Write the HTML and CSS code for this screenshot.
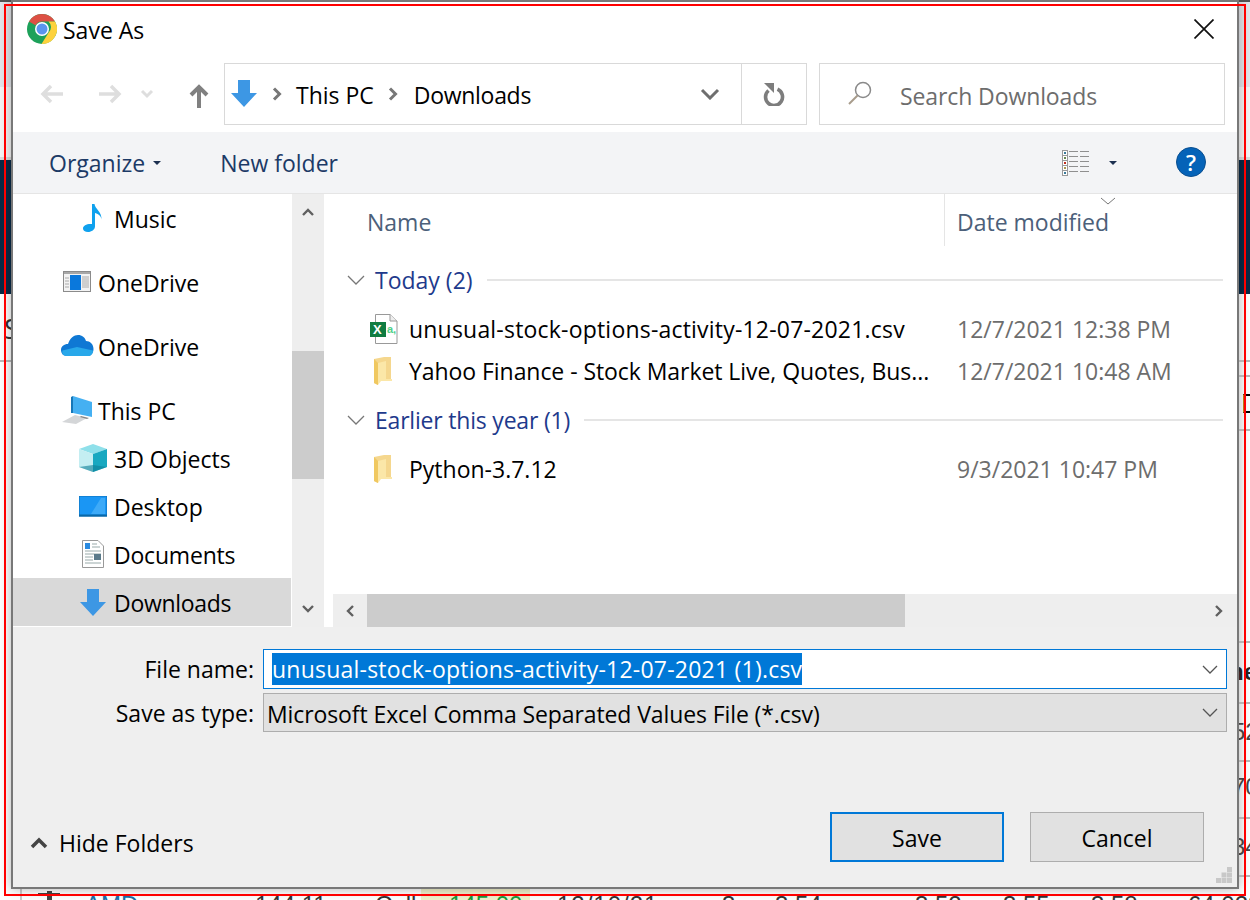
FILE: index.html
```html
<!DOCTYPE html>
<html lang="en">
<head>
<meta charset="utf-8">
<title>Save As</title>
<link rel="stylesheet" href="styles.css">
</head>
<body>
<div class="backdrop">
  <div class="bg-top"></div>
  <div class="bg-band"></div>
  <div class="bg-row bg-row-s"><span>S</span></div>
  <div class="bg-amd">
    <svg class="bg-plus" width="22" height="12" viewBox="0 0 22 12"><path d="M9 0H14V2H22V5H14V12H9V5H0V2H9Z" fill="#444"/></svg><span class="bg-link">AMD</span><span>144.11</span><span>Call</span><span class="bg-green">145.00</span><span class="bg-date">12/10/21</span><span>3</span><span>3.54</span><span>3.52</span><span>3.55</span><span>3.58</span><span>64,028</span>
  </div>
</div>
<div class="right-bits">
  <i class="rl rl1"></i><i class="rl rl2"></i><i class="rl rl3"></i><i class="rl rl4"></i><i class="rl rl5"></i><i class="rl rl6"></i><i class="rl rl7"></i><i class="rl rl8"></i>
  <i class="rb-box"></i>
  <span class="rb rb1">ne</span><span class="rb rb2">52</span><span class="rb rb3">70</span><span class="rb rb4">34</span>
</div>
<div class="red-frame"></div>

<main class="dialog">
  <header class="titlebar">
    <svg class="chrome" width="30" height="30" viewBox="0 0 30 30">
      <circle cx="15" cy="15" r="15" fill="#1da15a"/>
      <path d="M15 0A15 15 0 0 1 28 7.500H15A7.500 7.500 0 0 0 8.500 11.300L2 7.500A15 15 0 0 1 15 0Z" fill="#dd5044"/>
      <path d="M28 7.500A15 15 0 0 1 14.500 30L21.500 18.700A7.500 7.500 0 0 0 21.500 7.500Z" fill="#fdd23d"/>
      <circle cx="15" cy="15" r="7" fill="#fff"/>
      <circle cx="15" cy="15" r="5.500" fill="#5a95ef"/>
    </svg>
    <span class="title">Save As</span>
    <svg class="close" width="20" height="20" viewBox="0 0 20 20"><path d="M0.500 0.500L19.500 19.500M19.500 0.500L0.500 19.500" stroke="#111" stroke-width="1.700" fill="none"/></svg>
  </header>

  <nav class="navbar">
    <div class="nav-buttons">
      <svg class="nav-back" width="24" height="20" viewBox="0 0 24 20"><path d="M11 2L3 10L11 18M3 10H23" stroke="#dedede" stroke-width="3.500" fill="none"/></svg>
      <svg class="nav-fwd" width="24" height="20" viewBox="0 0 24 20"><path d="M13 2L21 10L13 18M1 10H21" stroke="#dedede" stroke-width="3.500" fill="none"/></svg>
      <svg class="nav-down" width="14" height="10" viewBox="0 0 14 10"><path d="M2 2L7 7L12 2" stroke="#dedede" stroke-width="3" fill="none"/></svg>
      <svg class="nav-up" width="20" height="24" viewBox="0 0 20 24"><path d="M2 11L10 3L18 11M10 3V24" stroke="#808080" stroke-width="4" fill="none"/></svg>
    </div>
    <div class="address">
      <svg class="addr-icon" width="26" height="27" viewBox="0 0 26 27"><path d="M7 0H19V13H26L13 27L0 13H7Z" fill="#3d97e4"/></svg>
      <svg class="crumb crumb-a" width="10" height="14" viewBox="0 0 10 14"><path d="M2 1.500L7.500 7L2 12.500" stroke="#777" stroke-width="3" fill="none"/></svg>
      <span class="crumb-text">This PC</span>
      <svg class="crumb crumb-b" width="10" height="14" viewBox="0 0 10 14"><path d="M2 1.500L7.500 7L2 12.500" stroke="#777" stroke-width="3" fill="none"/></svg>
      <span class="crumb-text tight">Downloads</span>
      <svg class="addr-chev" width="20" height="12" viewBox="0 0 20 12"><path d="M2 2L10 10L18 2" stroke="#6e6e6e" stroke-width="3" fill="none"/></svg>
      <div class="refresh">
        <svg width="22" height="24" viewBox="0 0 22 24"><path d="M14.500 7.200A8.500 8.500 0 1 1 5.500 8.500" stroke="#7d7d7d" stroke-width="3.600" fill="none"/><path d="M1 1H11V11Z" fill="#7d7d7d"/></svg>
      </div>
    </div>
    <div class="search">
      <svg width="28" height="28" viewBox="0 0 28 28"><circle cx="17" cy="10" r="7.500" stroke="#8a8a8a" stroke-width="1.500" fill="none"/><path d="M11.500 15.500L3 24" stroke="#a89c8c" stroke-width="2" fill="none"/></svg>
      <span class="search-text">Search Downloads</span>
    </div>
  </nav>

  <div class="toolbar">
    <span class="tool-btn">Organize</span>
    <span class="caret"></span>
    <span class="tool-btn tool-new">New folder</span>
    <svg class="view-icon" width="28" height="28" viewBox="0 0 28 28">
      <rect x="0.500" y="1.500" width="5" height="5" fill="#fff" stroke="#999"/><rect x="0.500" y="6.500" width="5" height="5" fill="#fff" stroke="#999"/><rect x="0.500" y="11.500" width="5" height="5" fill="#fff" stroke="#999"/><rect x="0.500" y="16.500" width="5" height="5" fill="#fff" stroke="#999"/><rect x="0.500" y="21.500" width="5" height="5" fill="#fff" stroke="#999"/>
      <rect x="2" y="3" width="2" height="2" fill="#3a7a9a"/><rect x="2" y="8" width="2" height="2" fill="#6a8a50"/><rect x="2" y="13" width="2" height="2" fill="#c03020"/><rect x="2" y="18" width="2" height="2" fill="#a89a50"/><rect x="2" y="23" width="2" height="2" fill="#3a7a9a"/>
      <path d="M7 2.500H16M18 2.500H27M7 7.500H16M18 7.500H27M7 12.500H16M18 12.500H27M7 17.500H16M18 17.500H27M7 22.500H16M18 22.500H27" stroke="#8f8f8f"/>
    </svg>
    <span class="caret caret-view"></span>
    <span class="help">?</span>
  </div>

  <div class="main">
    <aside class="sidebar">
      <ul class="tree">
        <li class="node sub">
          <svg width="20" height="28" viewBox="0 0 20 28"><path d="M9 0H11.500C12 5 19 8 18.500 15.500C18 11.500 14.500 9.500 12 9V22.500C12 25.500 8.500 28 5 28C2 28 0 26.500 0 24.500C0 21.500 4 19.500 9 20Z" fill="#0fa1ee"/></svg>
          <span>Music</span>
        </li>
        <li class="node gap">
          <svg width="28" height="22" viewBox="0 0 28 22"><rect x="0.500" y="0.500" width="27" height="20" fill="#f3f3f3" stroke="#8b8b8b"/><rect x="1" y="1" width="26" height="2" fill="#a8a8a8"/><rect x="7" y="4" width="11" height="15" fill="#0a78dc"/><path d="M19 6H26M19 8H26M19 10H26M19 12H26M19 14H26M19 16H26M2 7H6M2 10H6M2 13H6M2 16H6" stroke="#aaa"/></svg>
          <span>OneDrive</span>
        </li>
        <li class="node gap">
          <svg class="wide" width="33" height="22" viewBox="0 0 33 22"><path d="M6 21C2 21 0 18 0 15C0 11.500 3 9 7 9C9 3 13 0 17 0C21 0 24 2.500 25 6C29 6 32.500 9 32.500 14C32.500 18 30 21 27 21Z" fill="#0f78d4"/><path d="M6 21C2 21 0.500 18.500 1.500 15.500L16 12L32 15.500C32 19 30 21 27 21Z" fill="#28a8ea"/></svg>
          <span>OneDrive</span>
        </li>
        <li class="node gap">
          <svg class="wide" width="32" height="28" viewBox="0 0 32 28"><path d="M12 0L31 6V21L12 17Z" fill="#45b0f2"/><path d="M12 0L10 1V17L12 17Z" fill="#1677b8"/><path d="M1 26L14 19L26 22L15 28Z" fill="#d4d6d8"/><path d="M20 20L28 22L26 23L19 21Z" fill="#888"/></svg>
          <span>This PC</span>
        </li>
        <li class="node sub">
          <svg width="28" height="28" viewBox="0 0 28 28"><path d="M14 0L28 5L14 10L0 5Z" fill="#8fe0ea"/><path d="M0 5L14 10V28L0 23Z" fill="#c4eef2"/><path d="M14 10L28 5V23L14 28Z" fill="#18a8c0"/><path d="M14 21L28 23L14 28L0 23Z" fill="#0e7f96" opacity=".6"/></svg>
          <span>3D Objects</span>
        </li>
        <li class="node sub">
          <svg width="28" height="21" viewBox="0 0 28 21"><rect width="28" height="20" fill="#1a96f4" stroke="#0a6fb8"/><path d="M12 18L22 2H26V18Z" fill="#3daaf8"/><rect y="18.500" width="28" height="2" fill="#0a68a8"/></svg>
          <span>Desktop</span>
        </li>
        <li class="node sub">
          <svg width="22" height="28" viewBox="0 0 22 28"><path d="M0.500 0.500H16L21.500 6V27.500H0.500Z" fill="#fff" stroke="#999"/><path d="M3 4H7M10 4H15M10 7H18M3 11H19M3 14H19M3 17H11M3 20H11M3 23H19" stroke="#9aa"/><rect x="3" y="3" width="5" height="6" fill="#2a8ae0"/><rect x="12" y="14" width="7" height="6" fill="#5a7a8a"/></svg>
          <span class="tight-s">Documents</span>
        </li>
        <li class="node sub selected">
          <svg width="26" height="27" viewBox="0 0 26 27"><path d="M7 0H19V13H26L13 27L0 13H7Z" fill="#3d97e4"/></svg>
          <span class="tight">Downloads</span>
        </li>
      </ul>
    </aside>
    <div class="vscroll">
      <svg class="sb-up" width="12" height="8" viewBox="0 0 12 8"><path d="M1 7L6 2L11 7" stroke="#606060" stroke-width="2.400" fill="none"/></svg>
      <div class="vthumb"></div>
      <svg class="sb-down" width="12" height="8" viewBox="0 0 12 8"><path d="M1 1L6 6L11 1" stroke="#606060" stroke-width="2.400" fill="none"/></svg>
    </div>
    <section class="files">
      <div class="colhead">
        <span class="col-name">Name</span>
        <span class="col-date">Date modified
          <svg class="sort" width="16" height="8" viewBox="0 0 16 8"><path d="M1 1L8 7L15 1" stroke="#777" fill="none"/></svg>
        </span>
      </div>
      <div class="listing">
        <div class="group group-first">
          <svg width="18" height="10" viewBox="0 0 18 10"><path d="M1 1L9 9L17 1" stroke="#777" stroke-width="1.300" fill="none"/></svg>
          <span>Today (2)</span><i></i>
        </div>
        <div class="file file-csv">
          <svg width="28" height="30" viewBox="0 0 28 30"><path d="M5.500 0.500H20L27 7V29.500H5.500Z" fill="#fff" stroke="#999"/><path d="M20 .500V7H27" fill="#eee" stroke="#999"/><rect y="8" width="16" height="15" fill="#107c41"/><text x="3" y="20" class="xl">X</text><text x="17" y="19" class="xa">a,</text></svg>
          <span class="fname fname-csv">unusual-stock-options-activity-12-07-2021.csv</span>
          <span class="fdate">12/7/2021 12:38 PM</span>
        </div>
        <div class="file file-y">
          <svg class="folder" width="19" height="28" viewBox="0 0 19 28"><path d="M0 2L10 0H17V24H19L4 24V28L0 26Z" fill="#f5d78e"/><path d="M4 6L12 4V22H18V24H7L4 28Z" fill="#fbe7a8"/><path d="M0 2L4 6V28L0 26Z" fill="#f0c860"/></svg>
          <span class="fname fname-y">Yahoo Finance - Stock Market Live, Quotes, Bus...</span>
          <span class="fdate">12/7/2021 10:48 AM</span>
        </div>
        <div class="group group-second">
          <svg width="18" height="10" viewBox="0 0 18 10"><path d="M1 1L9 9L17 1" stroke="#777" stroke-width="1.300" fill="none"/></svg>
          <span class="tight-s">Earlier this year (1)</span><i></i>
        </div>
        <div class="file file-p">
          <svg class="folder" width="19" height="28" viewBox="0 0 19 28"><path d="M0 2L10 0H17V24H19L4 24V28L0 26Z" fill="#f5d78e"/><path d="M4 6L12 4V22H18V24H7L4 28Z" fill="#fbe7a8"/><path d="M0 2L4 6V28L0 26Z" fill="#f0c860"/></svg>
          <span class="fname">Python-3.7.12</span>
          <span class="fdate">9/3/2021 10:47 PM</span>
        </div>
      </div>
      <div class="hscroll">
        <svg class="sb-left" width="8" height="12" viewBox="0 0 8 12"><path d="M7 1L2 6L7 11" stroke="#606060" stroke-width="2.400" fill="none"/></svg>
        <div class="hthumb"></div>
        <svg class="sb-right" width="8" height="12" viewBox="0 0 8 12"><path d="M1 1L6 6L1 11" stroke="#606060" stroke-width="2.400" fill="none"/></svg>
      </div>
    </section>
  </div>

  <div class="form">
    <div class="form-row">
      <label class="form-label">File name:</label>
      <div class="combo combo-name">
        <span class="sel">unusual-stock-options-activity-12-07-2021 (1).csv</span>
        <svg width="16" height="9" viewBox="0 0 16 9"><path d="M1 1L8 8L15 1" stroke="#555" stroke-width="1.300" fill="none"/></svg>
      </div>
    </div>
    <div class="form-row form-row2">
      <label class="form-label">Save as type:</label>
      <div class="combo combo-type">
        <span class="type-text">Microsoft Excel Comma Separated Values File (*.csv)</span>
        <svg width="16" height="9" viewBox="0 0 16 9"><path d="M1 1L8 8L15 1" stroke="#555" stroke-width="1.300" fill="none"/></svg>
      </div>
    </div>
    <div class="actions">
      <svg width="18" height="12" viewBox="0 0 18 12"><path d="M2 10L9 3L16 10" stroke="#444" stroke-width="3.500" fill="none"/></svg>
      <span class="hide">Hide Folders</span>
      <button class="btn btn-save">Save</button>
      <button class="btn btn-cancel">Cancel</button>
    </div>
    <svg class="grip" width="16" height="16" viewBox="0 0 16 16"><path d="M11 0h5v5h-5zM5.500 5.500h5v5h-5zM11 5.500h5v5h-5zM0 11h5v5H0zM5.500 11h5v5h-5zM11 11h5v5h-5z" fill="#c8c8c8"/></svg>
  </div>
</main>
</body>
</html>
```
FILE: styles.css
```css
* { box-sizing: border-box; }
html, body { margin: 0; padding: 0; }
body {
  width: 1250px;
  height: 900px;
  overflow: hidden;
  position: relative;
  background: #fff;
  font-family: "Open Sans", "Noto Sans", sans-serif;
  font-size: 23px;
  color: #000;
}
ul { list-style: none; margin: 0; padding: 0; }
svg { display: block; flex: none; }
.tight { letter-spacing: -0.3px; }
.tight-s { letter-spacing: -0.2px; }

.backdrop { position: absolute; inset: 0; display: flex; flex-direction: column; }
.bg-top {
  height: 160px;
  border-top: 2px solid #555;
  background: linear-gradient(#e4e6eb 0 85px, #f6f6f6 85px 155px, #ddd 155px);
}
.bg-band { height: 134px; background: #0a2a47; }
.bg-row { height: 68px; border-bottom: 2px solid #bbb; padding: 16px 0 0 4px; font-size: 27px; color: #333; }
.bg-amd {
  position: absolute; left: 20px; right: 0; top: 889px; height: 40px;
  border-left: 2px solid #ccc;
  font-family: "Liberation Sans", sans-serif; font-size: 24px; color: #333;
}
.bg-amd span { position: absolute; top: 2px; white-space: nowrap; }
.bg-plus { position: absolute; left: 16px; top: 2px; }
.bg-amd .bg-link { left: 63px; color: #1a6fa8; }
.bg-amd span:nth-child(3) { left: 233px; }
.bg-amd span:nth-child(4) { left: 353px; }
.bg-amd .bg-green { left: 399px; top: -2px; padding: 4px 8px 0 28px; color: #1a9a3a; background: #f1f1cb; }
.bg-amd .bg-date { left: 535px; letter-spacing: 1px; }
.bg-amd span:nth-child(7) { left: 700px; }
.bg-amd span:nth-child(8) { left: 753px; }
.bg-amd span:nth-child(9) { left: 893px; }
.bg-amd span:nth-child(10) { left: 981px; }
.bg-amd span:nth-child(11) { left: 1069px; }
.bg-amd span:nth-child(12) { left: 1166px; }

.right-bits { position: absolute; left: 1239px; top: 0; width: 11px; height: 900px; overflow: hidden; font-family: "Liberation Sans", sans-serif; font-size: 24px; color: #444; z-index: 3; }
.rb { position: absolute; left: -7px; }
.rb1 { top: 658px; font-weight: 700; color: #222; left: -10px; }
.rb2 { top: 718px; }
.rb3 { top: 773px; }
.rb4 { top: 833px; }
.rl { position: absolute; left: 0; width: 11px; height: 2px; background: #b5b5b5; }
.rl1 { top: 360px; }
.rl2 { top: 375px; }
.rl3 { top: 429px; }
.rl4 { top: 641px; }
.rl5 { top: 702px; }
.rl6 { top: 760px; }
.rl7 { top: 817px; }
.rl8 { top: 875px; }
.rb-box { position: absolute; left: 4px; top: 394px; width: 12px; height: 19px; border: 2px solid #000; border-left: 2px solid #b87a10; }

.red-frame { position: absolute; left: 4px; top: 4px; width: 1242px; height: 892px; border: 2px solid #f00; z-index: 5; pointer-events: none; }

.dialog {
  position: absolute; left: 11px; top: 0; width: 1228px; height: 889px;
  border: 2px solid #787878; background: #fff;
  box-shadow: 0 0 12px rgba(0, 0, 0, .3);
  display: flex; flex-direction: column; z-index: 2;
}
.titlebar { height: 60px; display: flex; align-items: center; padding: 0 23px 6px 14px; flex: none; }
.title { margin-left: 6px; font-size: 23px; margin-top: 2px; }
.close { margin-left: auto; }

.navbar { height: 70px; flex: none; display: flex; padding: 1px 12px 0 0; align-items: flex-start; }
.nav-buttons { width: 211px; height: 62px; display: flex; align-items: center; }
.nav-back { margin-left: 27px; }
.nav-fwd { margin-left: 34px; }
.nav-down { margin-left: 18px; }
.nav-up { margin-left: 35px; margin-top: 3px; }
.address { width: 583px; height: 62px; border: 1px solid #d9d9d9; display: flex; align-items: center; padding-left: 6px; }
.addr-icon { margin-bottom: 2px; }
.crumb-a { margin: 0 14px 0 15px; }
.crumb-b { margin: 0 16px 0 14px; }
.crumb-text { font-size: 23px; margin-top: 2px; }
.addr-chev { margin-left: auto; margin-right: 21px; }
.refresh { width: 65px; height: 60px; border-left: 1px solid #d9d9d9; display: flex; align-items: center; justify-content: center; }
.search { margin-left: 12px; width: 406px; height: 62px; border: 1px solid #d9d9d9; display: flex; align-items: center; padding-left: 26px; color: #6d6d6d; font-size: 23px; gap: 26px; }
.search-text { margin-top: 4px; letter-spacing: -0.1px; }

.toolbar { height: 62px; flex: none; background: #f3f4f6; border-bottom: 1px solid #e5e5e5; display: flex; align-items: center; color: #1c3a66; font-size: 23px; }
.tool-btn { margin-left: 36px; }
.tool-new { margin-left: 59px; }
.caret { width: 0; height: 0; border: 4px solid transparent; border-top: 4px solid #1c3050; border-bottom: 0; margin-left: 8px; }
.view-icon { margin-left: auto; }
.caret-view { margin-left: 19px; }
.help { width: 30px; height: 30px; border-radius: 50%; background: #0563b8; border: 1px solid #0a4f90; color: #fff; margin: 0 31px 2px 59px; display: flex; align-items: center; justify-content: center; font-size: 22px; font-weight: 600; }

.main { height: 433px; flex: none; display: flex; }
.sidebar { width: 278px; flex: none; overflow: hidden; margin-right: 1px; }
.node { height: 48px; display: grid; grid-template-columns: 28px auto; justify-content: start; align-items: center; }
.node svg { justify-self: center; }
.node span { margin-top: 1px; }
.sub { padding-left: 66px; column-gap: 7px; }
.gap { margin-top: 16px; padding-left: 50px; column-gap: 7px; }
.gap .wide { margin: 0 -3px; }
.tree .selected { background: #d9d9d9; }
.vscroll { width: 32px; flex: none; background: #eee; display: flex; flex-direction: column; align-items: center; }
.sb-up { margin-top: 14px; }
.vthumb { width: 32px; height: 128px; background: #ccc; margin-top: 135px; }
.sb-down { margin-top: auto; margin-bottom: 14px; }
.files { flex: 1; margin-left: 9px; display: flex; flex-direction: column; min-width: 0; position: relative; }
.colhead { height: 52px; flex: none; position: relative; display: flex; align-items: center; color: #4c607a; font-size: 23px; padding-top: 4px; }
.col-name { margin-left: 34px; }
.col-date { position: absolute; left: 611px; top: 0; height: 52px; border-left: 1px solid #e5e5e5; padding: 4px 0 0 12px; display: flex; align-items: center; }
.sort { position: absolute; left: 155px; top: 3px; }
.listing { flex: 1; }
.group { height: 40px; display: flex; align-items: center; color: #1e3a8c; font-size: 23px; padding-left: 14px; }
.group svg { margin-right: 10px; }
.group i { flex: 1; height: 2px; background: #e5e5e5; margin: 0 14px; }
.group-first { margin-top: 14px; }
.group-second { margin-top: 8px; }
.file { height: 42px; display: flex; align-items: center; position: relative; padding-left: 76px; white-space: nowrap; }
.file svg { position: absolute; left: 37px; top: 6px; }
.file .folder { left: 41px; top: 7px; }
.fdate { position: absolute; left: 624px; color: #6d6d6d; }
.file-csv { margin-top: 8px; }
.file-p { margin-top: 8px; }
.fname-csv { letter-spacing: 0.2px; }
.fname-y { letter-spacing: -0.06px; }
.xl { font: 700 13px "Liberation Sans", sans-serif; fill: #fff; }
.xa { font: 700 11px "Liberation Sans", sans-serif; fill: #4fd08a; }
.hscroll { height: 33px; flex: none; background: #eee; display: flex; align-items: center; position: relative; padding-left: 13px; }
.hthumb { position: absolute; left: 34px; top: 0; width: 538px; height: 33px; background: #ccc; }
.sb-right { margin-left: auto; margin-right: 14px; }

.form { flex: 1; background: #efefef; position: relative; padding-top: 22px; }
.form-row { display: flex; align-items: center; height: 40px; }
.form-row2 { margin-top: 4px; height: 39px; }
.form-label { width: 241px; text-align: right; font-size: 23px; margin-right: 9px; white-space: nowrap; }
.combo { width: 964px; height: 100%; display: flex; align-items: center; border: 1px solid #0078d7; background: #fff; padding-right: 8px; justify-content: space-between; }
.sel { margin: 0 0 1px 8px; background: #0078d7; color: #fff; font-size: 23px; line-height: 32px; letter-spacing: 0.22px; }
.combo-type { background: #e1e1e1; border-color: #adadad; padding-left: 4px; font-size: 23px; }
.type-text { letter-spacing: -0.1px; margin-top: 3px; margin-left: -1px; }
.actions { position: absolute; left: 0; right: 0; top: 185px; height: 50px; display: flex; align-items: center; padding-left: 17px; }
.hide { margin-left: 11px; margin-top: 12px; font-size: 23px; }
.actions svg { margin-top: 12px; }
.btn { height: 50px; width: 174px; font: inherit; font-size: 23px; background: #e1e1e1; border: 1px solid #adadad; padding: 2px 0 0; color: #000; }
.btn-save { margin-left: auto; border: 2px solid #0078d7; }
.btn-cancel { margin-left: 26px; margin-right: 33px; }
.grip { position: absolute; right: 5px; bottom: 4px; }
```
